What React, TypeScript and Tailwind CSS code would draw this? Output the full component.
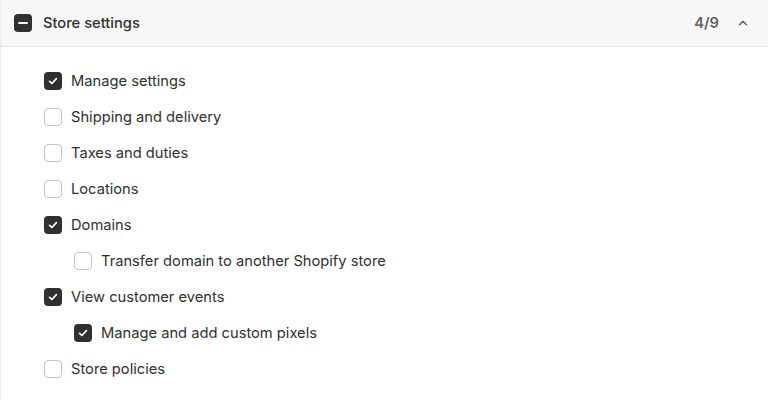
const Check = ({ checked }: { checked: boolean }) =>
  checked ? (
    <span className="flex h-[18px] w-[18px] shrink-0 items-center justify-center rounded-[4px] bg-[#303030]">
      <svg width="12" height="12" viewBox="0 0 12 12" fill="none">
        <path d="M2.6 6.3 4.9 8.5 9.4 3.6" stroke="#fff" strokeWidth="1.7" strokeLinecap="round" strokeLinejoin="round" />
      </svg>
    </span>
  ) : (
    <span className="h-[18px] w-[18px] shrink-0 rounded-[4px] border border-[#c4c4c4] bg-white"></span>
  );

const App = () => {
  const items = [
    { label: "Manage settings", checked: true, nested: false },
    { label: "Shipping and delivery", checked: false, nested: false },
    { label: "Taxes and duties", checked: false, nested: false },
    { label: "Locations", checked: false, nested: false },
    { label: "Domains", checked: true, nested: false },
    { label: "Transfer domain to another Shopify store", checked: false, nested: true },
    { label: "View customer events", checked: true, nested: false },
    { label: "Manage and add custom pixels", checked: true, nested: true },
    { label: "Store policies", checked: false, nested: false },
  ];

  return (
    <div
      className="h-[400px] w-[768px] overflow-hidden border-l border-[#ebebeb] bg-white text-[#303030]"
      style={{ fontFamily: "Inter, 'Noto Sans', sans-serif" }}
    >
      <div className="flex h-[47px] items-center border-b border-[#e6e6e6] bg-[#f7f7f7] pl-[13px] pr-[18px]">
        <span className="flex h-[18px] w-[18px] items-center justify-center rounded-[4px] bg-[#303030]">
          <span className="h-[2px] w-[10px] rounded-full bg-white"></span>
        </span>
        <span className="ml-[11px] text-[14.7px] font-[450]">Store settings</span>
        <span className="ml-auto text-[14.7px] font-semibold text-[#616161]">4/9</span>
        <svg className="ml-[17px]" width="14" height="14" viewBox="0 0 14 14" fill="none">
          <path d="M3.5 8.8 7 5.3l3.5 3.5" stroke="#616161" strokeWidth="1.5" strokeLinecap="round" strokeLinejoin="round" />
        </svg>
      </div>

      <div className="flex flex-col pt-[16px]">
        {items.map((item, index) => (
          <div
            key={index}
            className={`flex h-[36px] items-center gap-[9px] ${item.nested ? "pl-[73px]" : "pl-[43px]"}`}
          >
            <Check checked={item.checked} />
            <span className="text-[14.7px]">{item.label}</span>
          </div>
        ))}
      </div>
    </div>
  );
};

export default App;
